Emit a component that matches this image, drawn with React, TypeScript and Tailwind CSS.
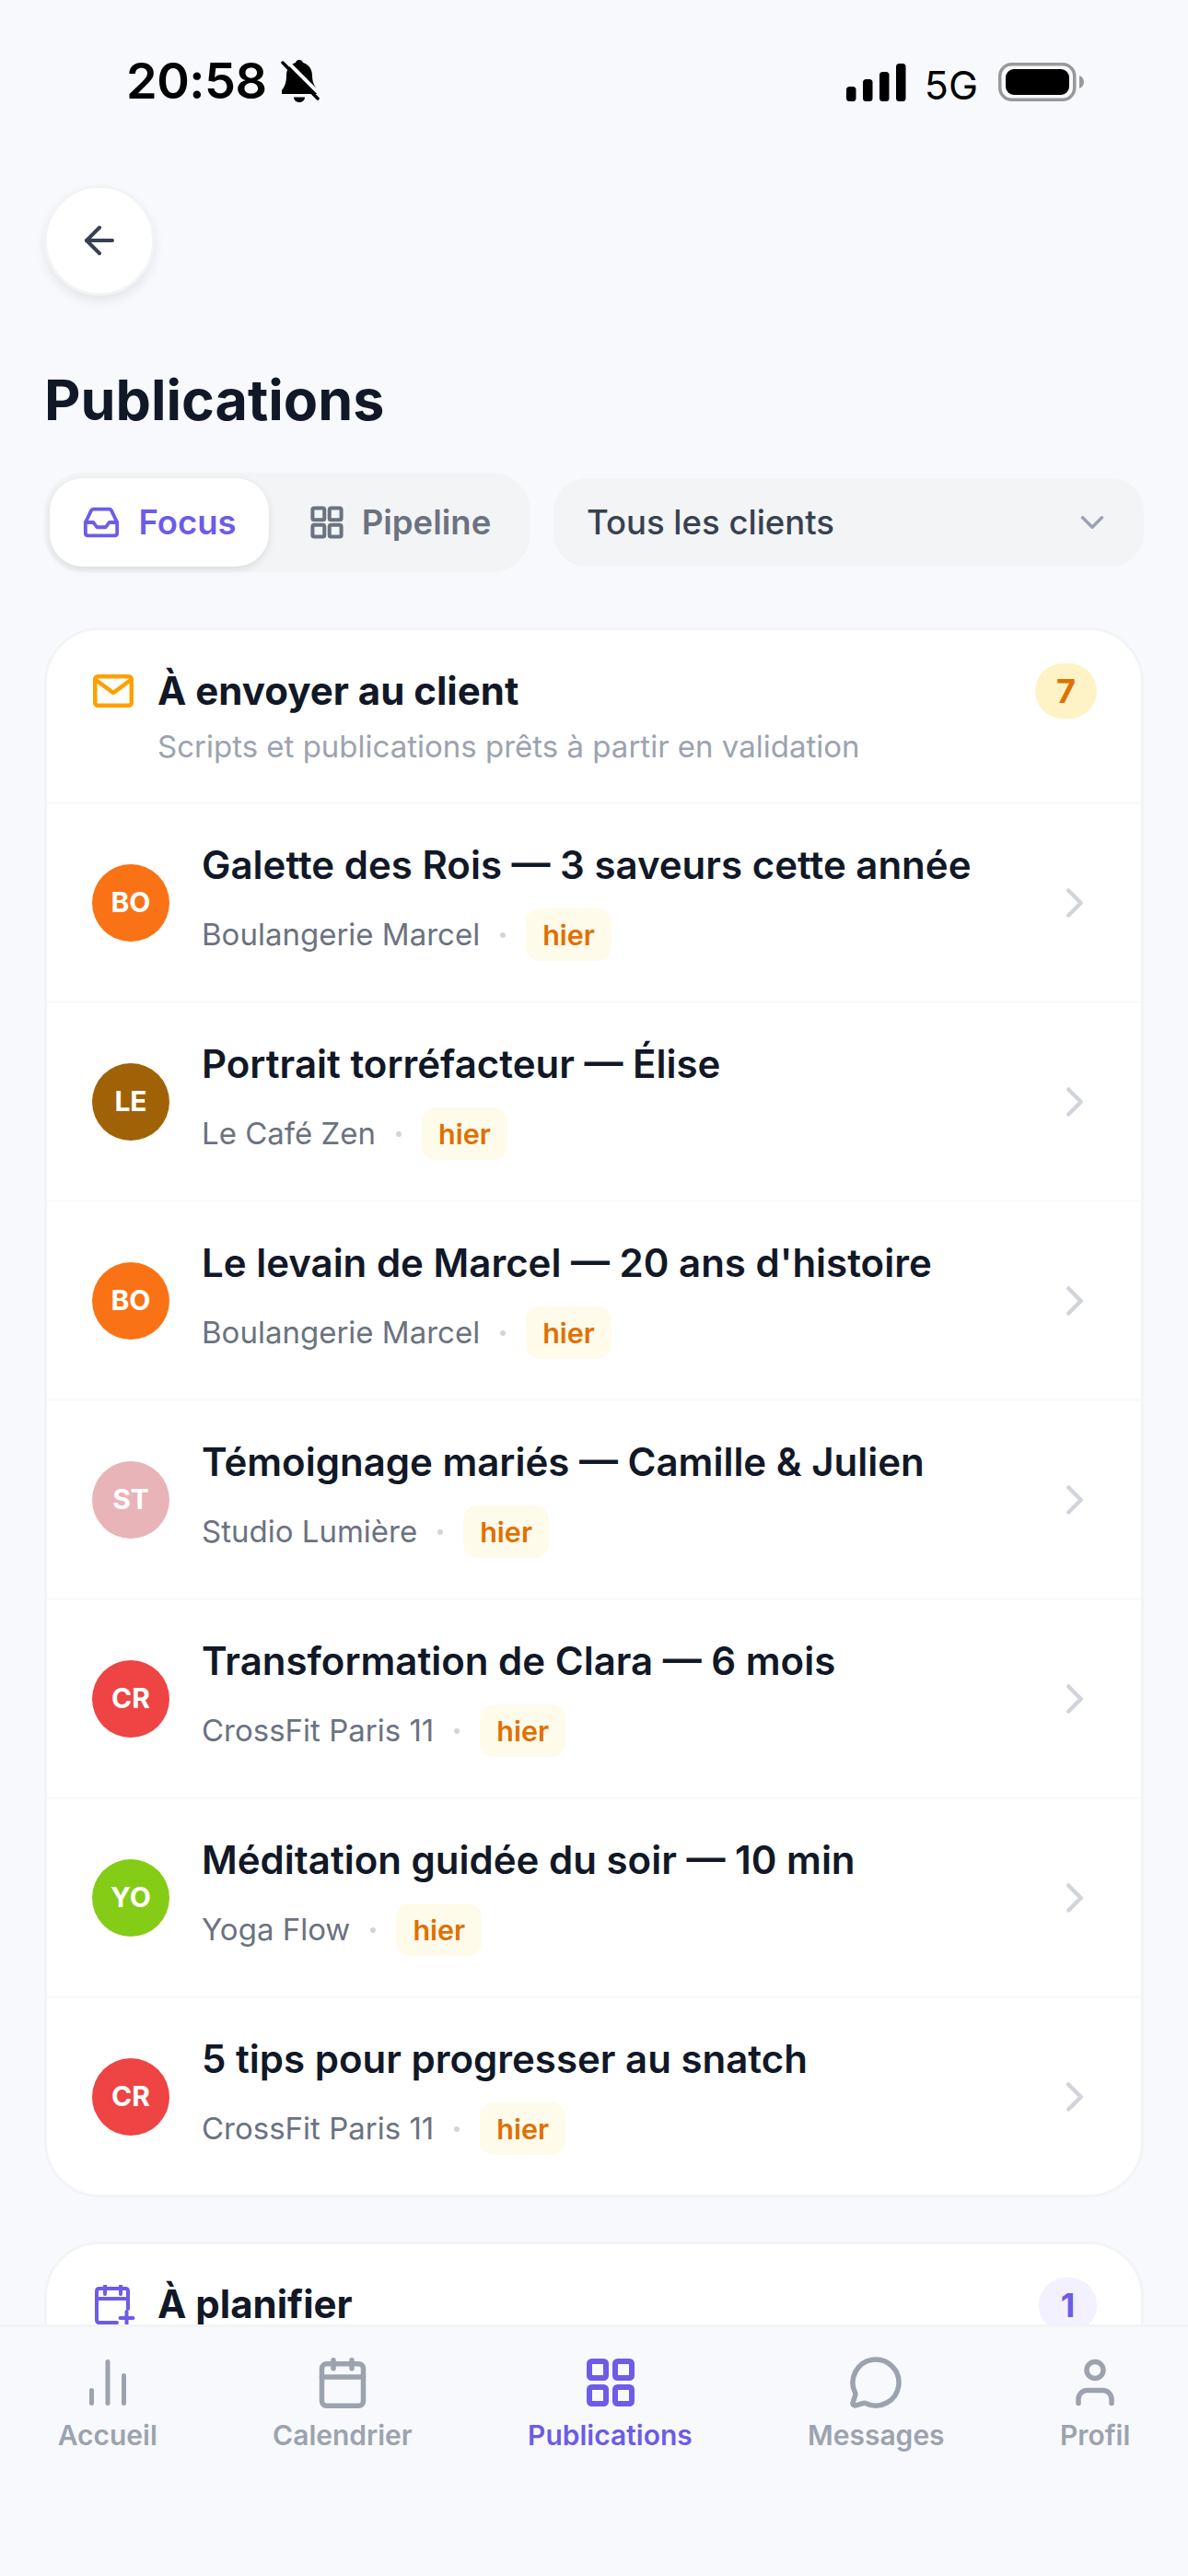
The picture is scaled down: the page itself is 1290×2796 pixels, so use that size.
import React from "react";
import { ArrowLeft, ChevronDown, ChevronRight, MessageCircle } from "lucide-react";

const rows = [
  { t: "Galette des Rois — 3 saveurs cette année", c: "Boulangerie Marcel", a: "BO", bg: "bg-[#f97316]" },
  { t: "Portrait torréfacteur — Élise", c: "Le Café Zen", a: "LE", bg: "bg-[#a16207]" },
  { t: "Le levain de Marcel — 20 ans d'histoire", c: "Boulangerie Marcel", a: "BO", bg: "bg-[#f97316]" },
  { t: "Témoignage mariés — Camille & Julien", c: "Studio Lumière", a: "ST", bg: "bg-[#e8b4b8]" },
  { t: "Transformation de Clara — 6 mois", c: "CrossFit Paris 11", a: "CR", bg: "bg-[#ef4444]" },
  { t: "Méditation guidée du soir — 10 min", c: "Yoga Flow", a: "YO", bg: "bg-[#84cc16]" },
  { t: "5 tips pour progresser au snatch", c: "CrossFit Paris 11", a: "CR", bg: "bg-[#ef4444]" },
];

function NavItem({ label, active, children }: { label: string; active?: boolean; children: React.ReactNode }) {
  return (
    <div className={`flex flex-col items-center ${active ? "text-[#6c5ce7]" : "text-[#9ca3af]"}`}>
      <div className="flex h-[66px] w-[66px] items-center justify-center">{children}</div>
      <span className="mt-[4px] whitespace-nowrap text-[30px] font-semibold leading-[40px]">{label}</span>
    </div>
  );
}

export default function App() {
  return (
    <div className="flex h-[2796px] w-[1290px] flex-col overflow-hidden bg-[#f8f9fd] font-['Inter',sans-serif]">
      <div className="min-h-0 flex-1 overflow-hidden">
        {/* status bar */}
        <div className="flex h-[201px] items-start justify-between pl-[137px] pr-[112px] pt-[64px] text-black">
          <div className="flex items-center">
            <span className="text-[54px] font-semibold leading-[48px] tracking-[-0.5px]">20:58</span>
            <svg width="42" height="46" viewBox="0 0 42 46" className="ml-[15px]">
              <path d="M20 0c2 0 3.500 1.200 4 3 7 2 10 8 10 14 0 8 3 12 6 16v4H1v-4c3-4 5-8 5-16C6 11 9 5 16 3c.5-1.800 2-3 4-3z" />
              <path d="M14 40.500h12c0 3-2.500 5.500-6 5.500s-6-2.500-6-5.500z" />
              <path d="M5 0l39 39" stroke="#f8f9fd" strokeWidth="4" />
              <path d="M2 3l38 39" stroke="#000" strokeWidth="3.500" strokeLinecap="round" />
            </svg>
          </div>
          <div className="mt-[1px] flex items-center">
            <svg width="65" height="41" viewBox="0 0 65 41" fill="#000">
              <rect x="0" y="25" width="10.500" height="16" rx="3.500" />
              <rect x="18" y="17" width="10.500" height="24" rx="3.500" />
              <rect x="36" y="9" width="10.500" height="32" rx="3.500" />
              <rect x="54" y="0" width="10.500" height="41" rx="3.500" />
            </svg>
            <span className="ml-[20px] mt-[6px] text-[43px] font-normal leading-[42px]">5G</span>
            <svg width="94" height="42" viewBox="0 0 94 42" className="ml-[22px]">
              <rect x="1.750" y="1.750" width="81" height="38.500" rx="13" fill="none" stroke="#999999" strokeWidth="3.500" />
              <rect x="8" y="7" width="69" height="28" rx="9" fill="#000" />
              <path d="M88 14c3 1 5 4 5 7s-2 6-5 7z" fill="#999999" />
            </svg>
          </div>
        </div>

        <div className="px-[48px]">
          {/* back */}
          <div className="flex h-[120px] w-[120px] items-center justify-center rounded-full border-[3px] border-[#f3f4f6] bg-white shadow-[0_6px_12px_rgba(0,0,0,0.08)]">
            <ArrowLeft size={48} strokeWidth={2} className="text-[#374151]" />
          </div>

          <h1 className="mt-[77px] text-[61px] font-bold leading-[72px] text-[#111827]">Publications</h1>

          {/* controls */}
          <div className="mt-[43px] flex items-center gap-[25px]">
            <div className="flex h-[108px] w-[528px] items-center rounded-[42px] bg-[#f3f4f6] p-[6px]">
              <div className="flex h-[96px] w-[238px] items-center justify-center gap-[19px] rounded-[36px] bg-white text-[#6c5ce7] shadow-[0_3px_9px_rgba(0,0,0,0.1)]">
                <svg width="42" height="42" viewBox="0 0 44 44" fill="none" stroke="currentColor" strokeWidth="4" strokeLinejoin="round" strokeLinecap="round">
                  <path d="M13 7h18c1 0 2 .500 2.500 1.500L40 22v12c0 2-1 3-3 3H7c-2 0-3-1-3-3V22l6.500-13.500C11 7.500 12 7 13 7z" />
                  <path d="M4 22h9l4 5.500h10l4-5.500h9" />
                </svg>
                <span className="text-[36.5px] font-semibold leading-[48px]">Focus</span>
              </div>
              <div className="flex flex-1 items-center justify-center gap-[16px] pl-[4px] text-[#6b7280]">
                <svg width="44" height="44" viewBox="0 0 24 24" fill="none" stroke="currentColor" strokeWidth="2.200" strokeLinejoin="round">
                  <rect x="3.500" y="3.500" width="7" height="7" rx="1" />
                  <rect x="13.500" y="3.500" width="7" height="7" rx="1" />
                  <rect x="3.500" y="13.500" width="7" height="7" rx="1" />
                  <rect x="13.500" y="13.500" width="7" height="7" rx="1" />
                </svg>
                <span className="text-[36.5px] font-semibold leading-[48px]">Pipeline</span>
              </div>
            </div>
            <div className="flex h-[96px] flex-1 items-center justify-between rounded-[36px] bg-[#f3f4f6] pl-[36px] pr-[35px]">
              <span className="text-[36.5px] font-medium leading-[48px] text-[#374151]">Tous les clients</span>
              <ChevronDown size={42} strokeWidth={2} className="text-[#9ca3af]" />
            </div>
          </div>

          {/* card 1 */}
          <div className="mt-[60px] overflow-hidden rounded-[60px] border-[3px] border-[#f3f4f6] bg-white">
            <div className="flex h-[186px] items-start justify-between pl-[50px] pr-[48px] pt-[36px]">
              <div className="flex items-start">
                <svg width="44" height="36" viewBox="0 0 44 36" fill="none" stroke="#ff9f00" strokeWidth="4.500" strokeLinejoin="round" strokeLinecap="round" className="mt-[12px] shrink-0">
                  <rect x="2.250" y="2.250" width="39.500" height="31.500" rx="3" />
                  <path d="M3 6l19 14L41 6" />
                </svg>
                <div className="ml-[26px] mt-[2px]">
                  <div className="text-[42px] font-bold leading-[56px] text-[#111827]">À envoyer au client</div>
                  <div className="mt-[8px] text-[33px] leading-[48px] text-[#9ca3af]">Scripts et publications prêts à partir en validation</div>
                </div>
              </div>
              <div className="flex h-[60px] w-[67px] items-center justify-center rounded-full bg-[#fef3c7] text-[36px] font-bold text-[#e07000]">7</div>
            </div>
            {rows.map((r) => (
              <div key={r.t} className="flex h-[216px] items-center border-t-[3px] border-[#f9fafb] pl-[49px] pr-[45px]">
                <div className={`flex h-[84px] w-[84px] shrink-0 items-center justify-center rounded-full text-[30px] font-bold text-white ${r.bg}`}>{r.a}</div>
                <div className="ml-[35px] min-w-0 flex-1">
                  <div className="text-[42px] font-semibold leading-[54px] text-[#111827]">{r.t}</div>
                  <div className="mb-[4px] mt-[20px] flex items-center">
                    <span className="text-[33px] leading-[57px] text-[#6b7280]">{r.c}</span>
                    <span className="ml-[22px] mr-[22px] h-[6px] w-[6px] rounded-full bg-[#d1d5db]" />
                    <span className="rounded-[15px] bg-[#fffbeb] px-[18px] text-[30.5px] font-semibold leading-[57px] text-[#e07000]">hier</span>
                  </div>
                </div>
                <ChevronRight size={54} strokeWidth={2} className="text-[#d1d5db]" />
              </div>
            ))}
          </div>

          {/* card 2 */}
          <div className="mt-[48px] rounded-[60px] border-[3px] border-[#f3f4f6] bg-white">
            <div className="flex h-[186px] items-start justify-between pl-[50px] pr-[48px] pt-[36px]">
              <div className="flex items-start">
                <div className="w-[44px] shrink-0 pl-[2px] pt-[8px]">
                  <svg width="44" height="48" viewBox="0 0 44 48" fill="none" stroke="#6c5ce7" strokeWidth="4" strokeLinecap="round" strokeLinejoin="round">
                    <path d="M24 41H5c-2 0-3-1-3-3V7c0-2 1-3 3-3h28c2 0 3 1 3 3v19" />
                    <path d="M2 15h34M11 1v9M28 1v9M34.500 29v14M27.500 36h14" />
                  </svg>
                </div>
                <div className="ml-[26px] mt-[1px] text-[42px] font-bold leading-[56px] text-[#111827]">À planifier</div>
              </div>
              <div className="flex h-[60px] w-[63px] items-center justify-center rounded-full bg-[#f3f0ff] text-[36px] font-bold text-[#6c5ce7]">1</div>
            </div>
          </div>
        </div>
      </div>

      {/* nav */}
      <nav className="flex h-[273px] shrink-0 items-start justify-around border-t-[3px] border-[#f3f4f6] bg-[#f8f9fd] pt-[27px]">
        <NavItem label="Accueil">
          <svg width="66" height="66" viewBox="0 0 66 66" fill="none" stroke="currentColor" strokeWidth="5" strokeLinecap="round">
            <path d="M15.500 55.500v-14M33 55.500v-45M50.500 55.500v-30" />
          </svg>
        </NavItem>
        <NavItem label="Calendrier">
          <svg width="66" height="66" viewBox="0 0 66 66" fill="none" stroke="currentColor" strokeWidth="5.500" strokeLinecap="round" strokeLinejoin="round">
            <rect x="10.500" y="12.750" width="45" height="45.500" rx="5" />
            <path d="M10.500 27h45M23 8.750v9M43 8.750v9" />
          </svg>
        </NavItem>
        <NavItem label="Publications" active>
          <svg width="66" height="66" viewBox="0 0 66 66" fill="none" stroke="currentColor" strokeWidth="6" strokeLinejoin="round">
            <rect x="11" y="10" width="18" height="18" rx="2.500" />
            <rect x="39" y="10" width="18" height="18" rx="2.500" />
            <rect x="11" y="38" width="18" height="18" rx="2.500" />
            <rect x="39" y="38" width="18" height="18" rx="2.500" />
          </svg>
        </NavItem>
        <NavItem label="Messages">
          <MessageCircle size={60} strokeWidth={2.2} />
        </NavItem>
        <NavItem label="Profil">
          <svg width="66" height="66" viewBox="0 0 66 66" fill="none" stroke="currentColor" strokeWidth="5.500" strokeLinecap="round">
            <circle cx="33" cy="19.500" r="9" />
            <path d="M15 55.500V51c0-5 4-9.500 9.500-9.500h17c5.500 0 9.500 4.500 9.500 9.500v4.500" />
          </svg>
        </NavItem>
      </nav>
    </div>
  );
}
